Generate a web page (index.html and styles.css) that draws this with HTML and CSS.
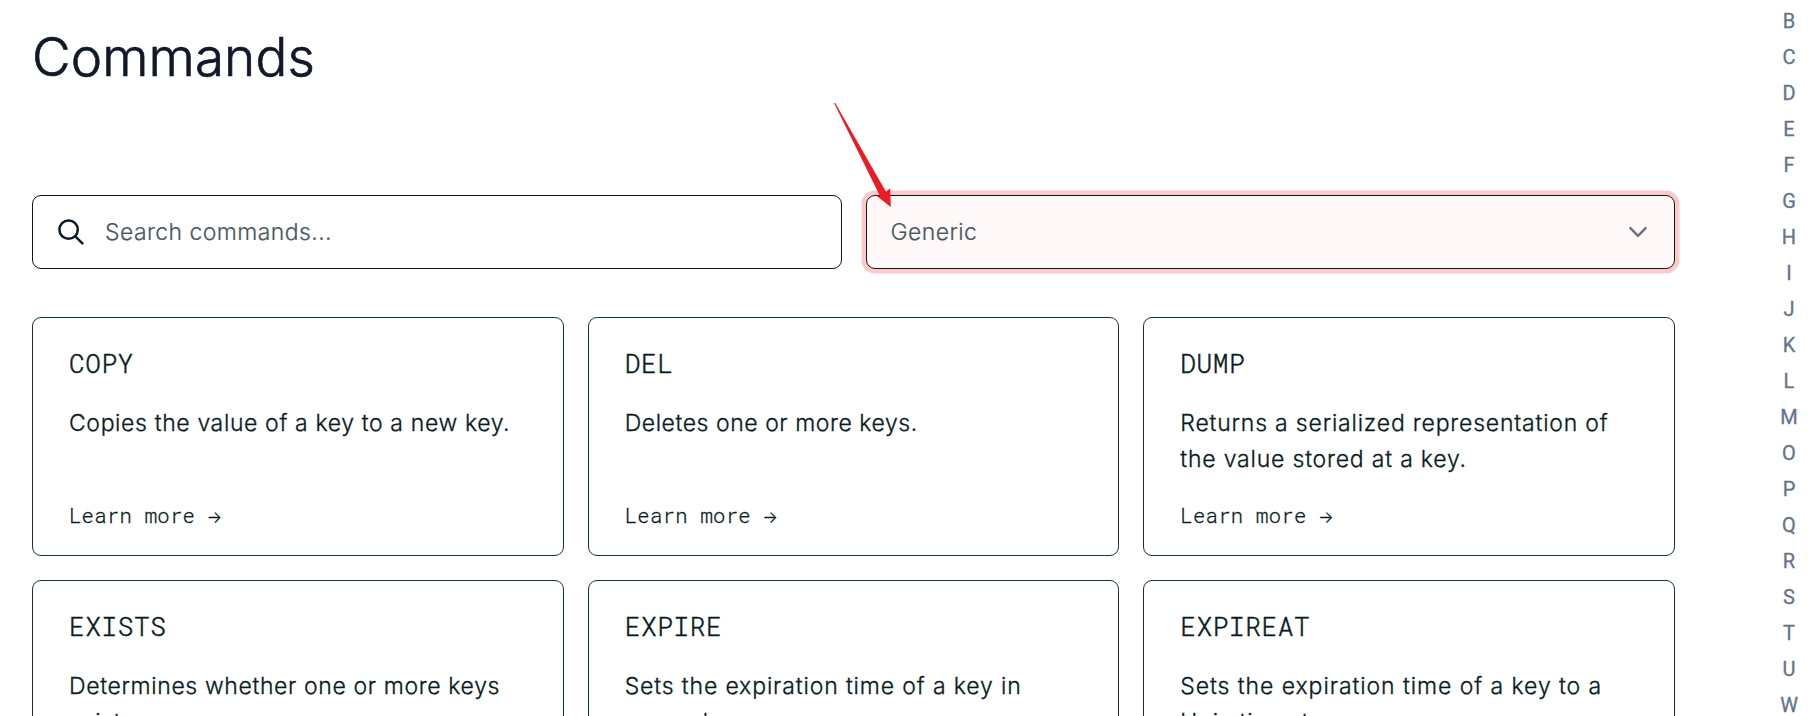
FILE: index.html
```
<!DOCTYPE html>
<html lang="en">
<head>
<meta charset="utf-8">
<title>Commands</title>
<link rel="stylesheet" href="styles.css">
</head>
<body>
<div class="page">
  <main class="main">
    <h1 class="title">Commands</h1>
    <div class="filters">
      <div class="field search">
        <svg class="search-icon" width="28" height="28" viewBox="0 0 28 28" fill="none" stroke="#091a23" stroke-width="2.5" stroke-linecap="round"><circle cx="11.6" cy="11.6" r="9.2"/><path d="M18.3 18.3L25.4 25.4"/></svg>
        <span class="field-text">Search commands...</span>
      </div>
      <div class="field select">
        <span class="field-text generic">Generic</span>
        <svg class="chevron" width="20" height="12" viewBox="0 0 20 12" fill="none" stroke="#6b7280" stroke-width="2.6" stroke-linecap="round" stroke-linejoin="round"><path d="M2.4 2.2L10 9.8L17.6 2.2"/></svg>
        <svg class="pointer" width="60" height="106" viewBox="0 0 60 106"><path fill="#ed1c24" d="M0 0L1.2 0L52 88.7L56.2 85.2L56.8 104L41.8 92.3L46 93Z"/></svg>
      </div>
    </div>
    <div class="cards">
      <article class="card"><h2 class="name">COPY</h2><p class="desc">Copies the value of a key to a new key.</p><a class="more">Learn more <span class="arrow">→</span></a></article>
      <article class="card"><h2 class="name">DEL</h2><p class="desc snug">Deletes one or more keys.</p><a class="more">Learn more <span class="arrow">→</span></a></article>
      <article class="card"><h2 class="name">DUMP</h2><p class="desc loose">Returns a serialized representation of<br>the value stored at a key.</p><a class="more">Learn more <span class="arrow">→</span></a></article>
      <article class="card"><h2 class="name">EXISTS</h2><p class="desc">Determines whether one or more keys<br>exist.</p></article>
      <article class="card"><h2 class="name">EXPIRE</h2><p class="desc looser">Sets the expiration time of a key in<br>seconds.</p></article>
      <article class="card"><h2 class="name">EXPIREAT</h2><p class="desc loosest">Sets the expiration time of a key to a<br>Unix timestamp.</p></article>
    </div>
  </main>
  <nav class="index">
    <a>B</a><a>C</a><a>D</a><a>E</a><a>F</a><a>G</a><a>H</a><a>I</a><a>J</a><a>K</a><a>L</a><a>M</a><a>O</a><a>P</a><a>Q</a><a>R</a><a>S</a><a>T</a><a>U</a><a>W</a>
  </nav>
</div>
</body>
</html>
```

FILE: styles.css
```
* { box-sizing: border-box; }
body {
  margin: 0;
  height: 716px;
  overflow: hidden;
  background: #fff;
  color: #091a23;
  font-family: Inter, "Liberation Sans", sans-serif;
}
.page { display: flex; justify-content: space-between; height: 716px; overflow: hidden; }
.main { width: 1643px; margin-left: 32px; }
.title {
  margin: 27px 0 108px;
  font-size: 53px;
  font-weight: 300;
  line-height: 60px;
  letter-spacing: 0.1px;
  color: #111827;
  -webkit-text-stroke: 0.7px #111827;
}
.filters { display: grid; grid-template-columns: 1fr 1fr; gap: 24px; }
.field {
  display: flex;
  align-items: center;
  height: 74px;
  border: 1px solid #091a23;
  border-radius: 9px;
}
.search { padding-left: 24px; gap: 20px; }
.select {
  position: relative;
  justify-content: space-between;
  padding: 0 26px 0 24px;
  background: #fff8f8;
  box-shadow: 0 0 0 4.5px #ffc9c9;
}
.field-text { font-size: 23px; font-weight: 300; letter-spacing: 0.42px; color: #485861; -webkit-text-stroke: 0.2px #485861; }
.generic { letter-spacing: 0.4px; }
.pointer { position: absolute; left: -33px; top: -93px; }
.cards {
  display: grid;
  grid-template-columns: repeat(3, 1fr);
  grid-auto-rows: 239px;
  gap: 24px;
  margin-top: 48px;
}
.card {
  display: flex;
  flex-direction: column;
  padding: 27px 36px 24px;
  border: 1px solid #163341;
  border-radius: 9px;
}
.name {
  margin: 0 0 24px;
  font: 300 26px/36px "Roboto Mono", "Liberation Mono", monospace;
  letter-spacing: 0.65px;
  -webkit-text-stroke: 0.5px #091a23;
}
.desc {
  margin: 0;
  font-size: 23px;
  font-weight: 300;
  line-height: 36px;
  letter-spacing: 0.63px;
  white-space: nowrap;
  -webkit-text-stroke: 0.3px #091a23;
}
.snug { letter-spacing: 0.55px; }
.loose { letter-spacing: 0.8px; }
.looser { letter-spacing: 0.86px; }
.loosest { letter-spacing: 0.93px; }
.more {
  margin-top: auto;
  font: 300 20.5px/27px "Roboto Mono", "Liberation Mono", monospace;
  letter-spacing: 0.32px;
  white-space: nowrap;
  -webkit-text-stroke: 0.3px #091a23;
}
.arrow { margin-left: -1px; font-family: Inter, sans-serif; font-size: 16px; }
.index {
  display: flex;
  flex-direction: column;
  align-items: center;
  width: 38px;
  padding-top: 3px;
  color: #64748b;
  font: 400 20px/36px Roboto, sans-serif;
  -webkit-text-stroke: 0.3px #64748b;
}
```
